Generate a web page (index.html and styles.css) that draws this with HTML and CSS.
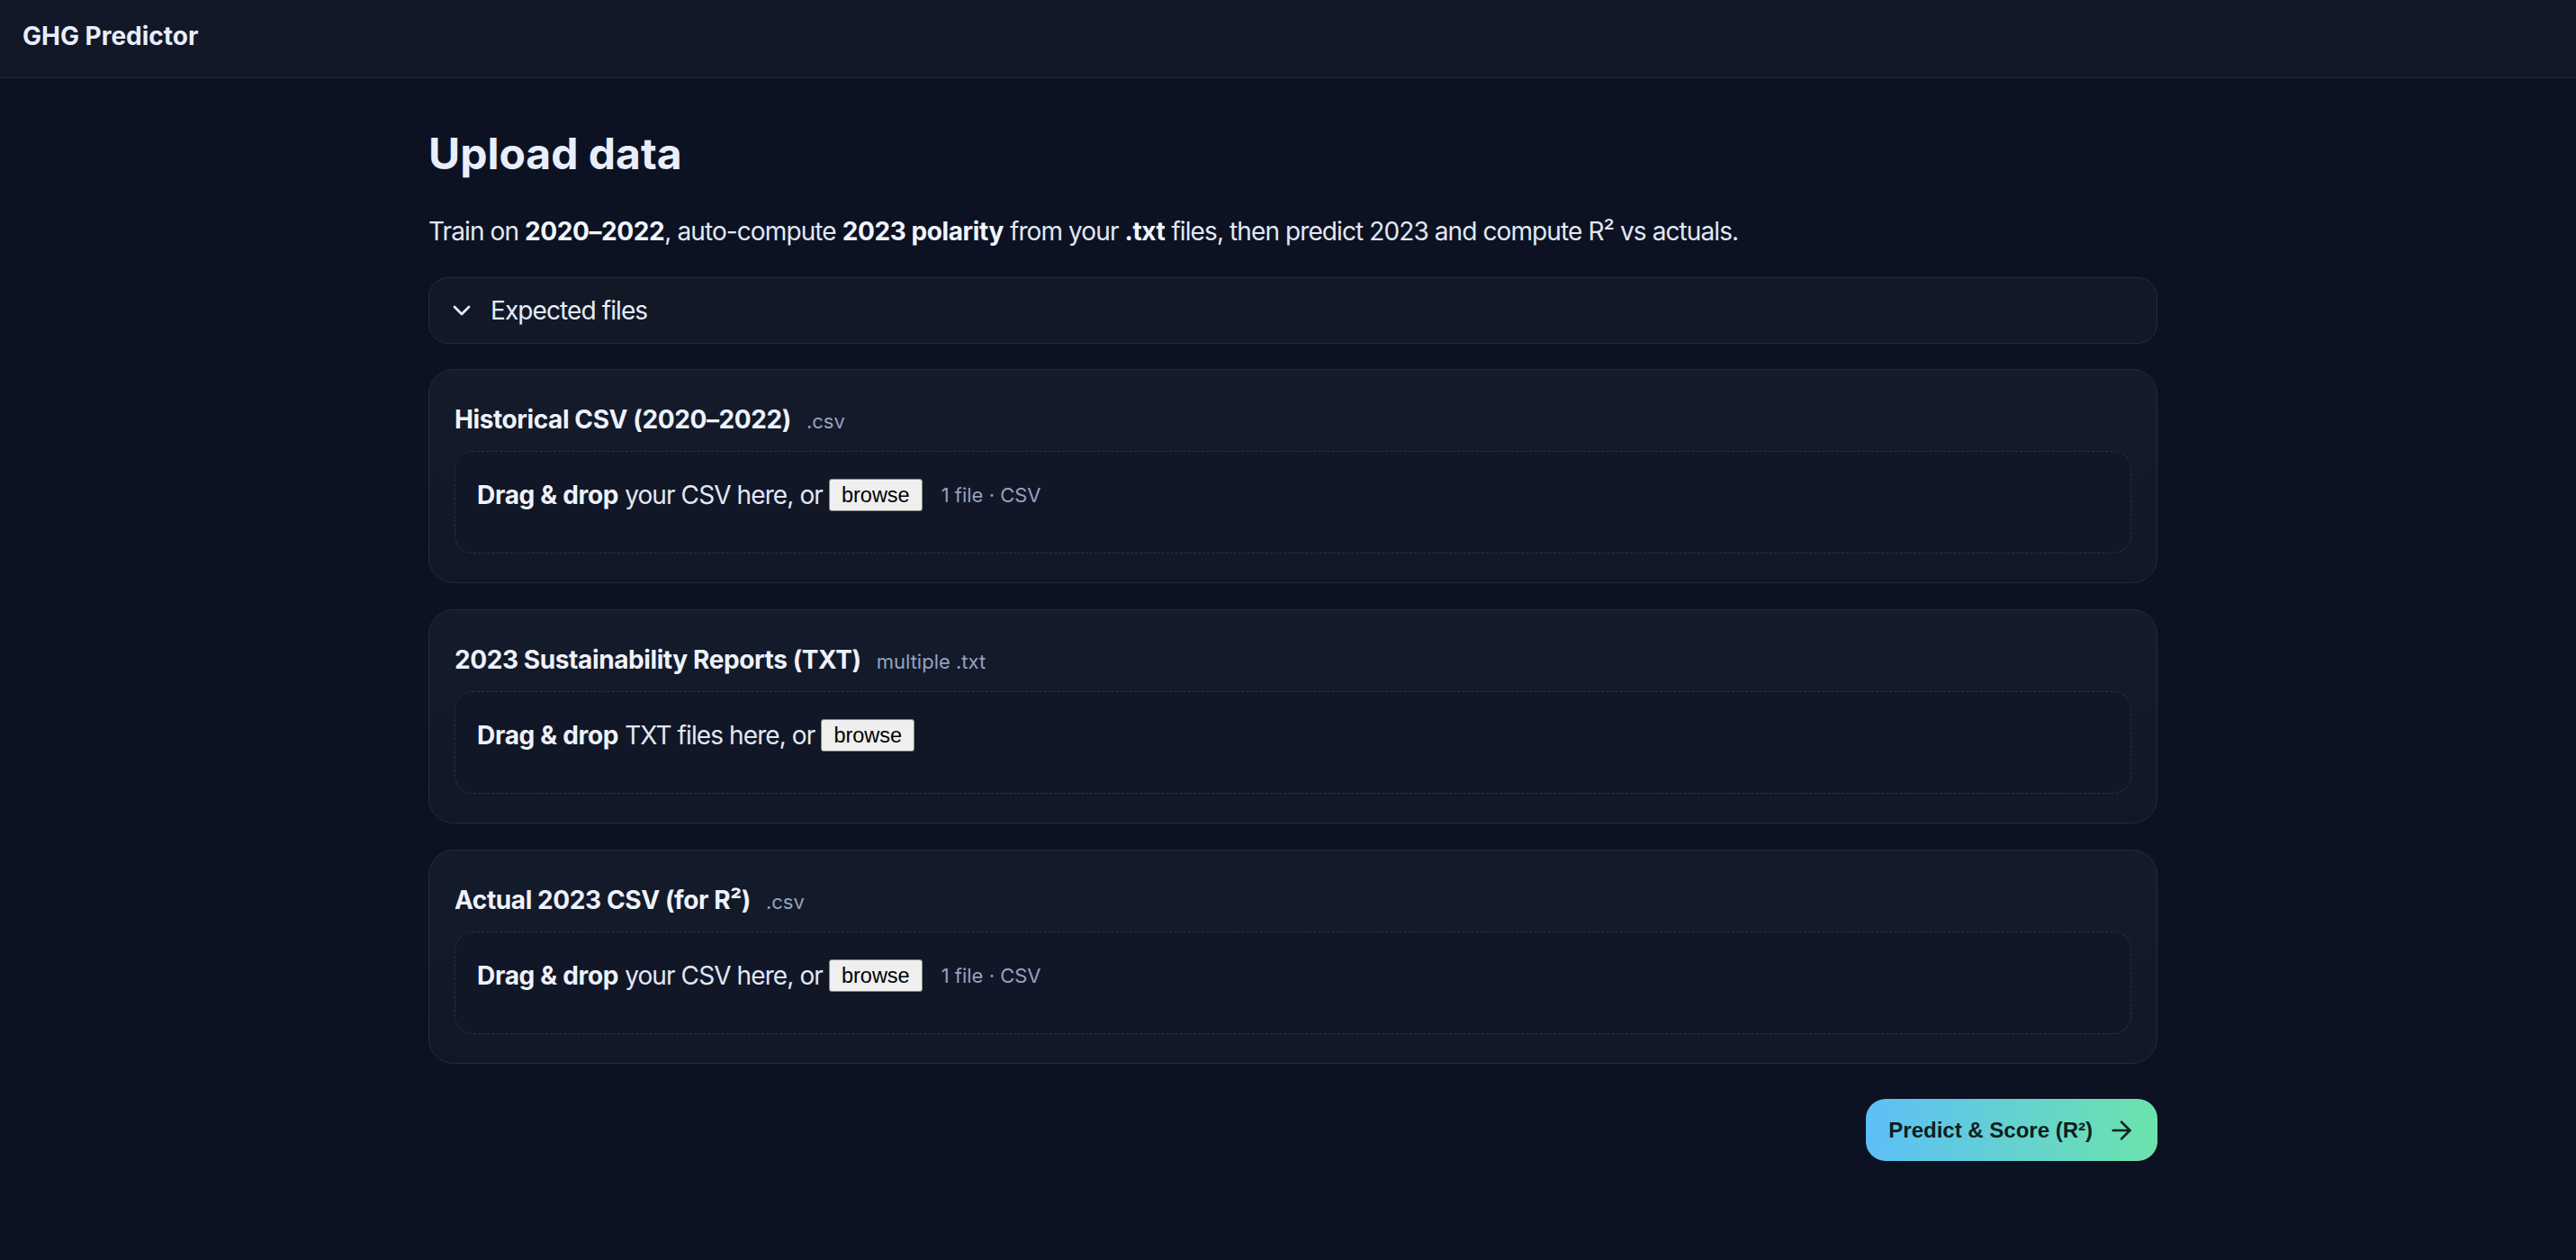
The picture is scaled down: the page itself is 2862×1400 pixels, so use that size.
FILE: index.html
```html
<!DOCTYPE html>
<html lang="en">
<head>
<meta charset="utf-8">
<title>GHG Predictor</title>
<link rel="stylesheet" href="styles.css">
</head>
<body>
<header class="topbar">
  <div class="brand">GHG Predictor</div>
</header>
<main class="page">
  <h1 class="title">Upload data</h1>
  <p class="lead">Train on <strong>2020–2022</strong>, auto-compute <strong>2023 polarity</strong> from your <strong>.txt</strong> files, then predict 2023 and compute R² vs actuals.</p>

  <details class="expected">
    <summary class="expected-summary">
      <svg class="chev" viewBox="0 0 24 24" width="32" height="32" fill="none" stroke="currentColor" stroke-width="2" stroke-linecap="round" stroke-linejoin="round"><polyline points="6 9 12 15 18 9"/></svg>
      <span>Expected files</span>
    </summary>
  </details>

  <section class="card">
    <div class="card-head"><span class="card-title">Historical CSV (2020–2022)</span><span class="card-hint">.csv</span></div>
    <div class="drop">
      <div class="drop-line"><b>Drag &amp; drop</b> your CSV here, or <button class="browse" type="button">browse</button><span class="meta">1 file · CSV</span></div>
    </div>
  </section>

  <section class="card">
    <div class="card-head"><span class="card-title">2023 Sustainability Reports (TXT)</span><span class="card-hint">multiple .txt</span></div>
    <div class="drop">
      <div class="drop-line"><b>Drag &amp; drop</b> TXT files here, or <button class="browse" type="button">browse</button></div>
    </div>
  </section>

  <section class="card">
    <div class="card-head"><span class="card-title">Actual 2023 CSV (for R²)</span><span class="card-hint">.csv</span></div>
    <div class="drop">
      <div class="drop-line"><b>Drag &amp; drop</b> your CSV here, or <button class="browse" type="button">browse</button><span class="meta">1 file · CSV</span></div>
    </div>
  </section>

  <div class="actions">
    <button class="predict" type="button">Predict &amp; Score (R²)
      <svg viewBox="0 0 24 24" width="32" height="32" fill="none" stroke="currentColor" stroke-width="2" stroke-linecap="round" stroke-linejoin="round"><path d="M5 12h14"/><path d="m12 5 7 7-7 7"/></svg>
    </button>
  </div>
</main>
</body>
</html>
```
FILE: styles.css
```css
* { box-sizing: border-box; }

html, body {
  margin: 0;
  padding: 0;
}

body {
  background: #0c1222;
  color: #e6ecf8;
  font-family: Inter, "Noto Sans", "Liberation Sans", sans-serif;
  min-height: 1400px;
}

.topbar {
  height: 87px;
  padding: 23px 25px 0;
  background: linear-gradient(180deg, #121827 0%, #111725 100%);
  border-bottom: 1px solid #222a3a;
}

.brand {
  font-size: 28px;
  line-height: 34px;
  font-weight: 700;
  color: #e8eefb;
}

.page {
  width: 1921px;
  margin-left: 476px;
  padding-top: 55px;
}

.title {
  margin: 0 0 36px;
  font-size: 48px;
  line-height: 58px;
  font-weight: 700;
  color: #e8eefb;
  letter-spacing: 0;
}

.lead {
  margin: 0 0 30px;
  font-size: 28px;
  line-height: 42px;
  color: #e2e8f4;
  letter-spacing: -0.9px;
}

.lead strong {
  font-weight: 700;
  color: #f1f5fd;
  letter-spacing: -0.4px;
}

.expected {
  border: 1px solid #232b3d;
  border-radius: 22px;
  background: #121826;
  margin-bottom: 28px;
}

.expected-summary {
  list-style: none;
  display: flex;
  align-items: center;
  gap: 16px;
  padding: 19px 20px;
  font-size: 28px;
  line-height: 34px;
  color: #e6ecf8;
  letter-spacing: -0.9px;
  cursor: pointer;
}

.expected-summary::-webkit-details-marker { display: none; }

.chev { color: #e6ecf8; flex: none; }

.card {
  border: 1px solid #222b3e;
  border-radius: 28px;
  background: linear-gradient(180deg, #141b2a 0%, #111725 100%);
  padding: 32px 28px;
  margin-bottom: 29px;
}

.card-head {
  display: flex;
  align-items: baseline;
  gap: 17px;
  height: 46px;
  line-height: 46px;
  margin-bottom: 12px;
  overflow: visible;
}

.card-title {
  font-size: 28px;
  font-weight: 700;
  color: #eef2fc;
  letter-spacing: -0.4px;
}

.card-hint {
  font-size: 22px;
  line-height: 30px;
  color: #95a2c2;
}

.drop {
  min-height: 114px;
  padding: 27px 24px 21px;
  border: 1px dashed #2a3345;
  border-radius: 20px;
  background: #111726;
}

.drop-line {
  font-size: 28px;
  line-height: 42px;
  color: #e2e8f4;
  display: flex;
  align-items: center;
  white-space: pre;
  letter-spacing: -0.9px;
}

.drop-line b {
  font-weight: 700;
  color: #eef2fc;
  letter-spacing: -0.3px;
}

.browse {
  font-family: "Liberation Sans", Arial, sans-serif;
  font-size: 23.5px;
  line-height: 26px;
  height: 36px;
  padding: 4px 13px;
  background: #efefef;
  color: #000;
  border: 1px solid #8a8a8a;
  border-radius: 3px;
  margin-left: 0;
  letter-spacing: 0;
}

.meta {
  margin-left: 21px;
  font-size: 22px;
  color: #95a2c2;
  letter-spacing: 0;
}

.actions {
  display: flex;
  justify-content: flex-end;
  margin-top: 39px;
}

.predict {
  display: flex;
  align-items: center;
  gap: 16px;
  height: 69px;
  padding: 0 24px 0 25px;
  border: 0;
  border-radius: 22px;
  background: linear-gradient(90deg, #5cbff7 0%, #6ce3ab 100%);
  color: #0e1f1c;
  font-family: "Liberation Sans", Arial, sans-serif;
  font-size: 24px;
  font-weight: 700;
  cursor: pointer;
}

.predict svg { flex: none; color: #10231f; }
```
